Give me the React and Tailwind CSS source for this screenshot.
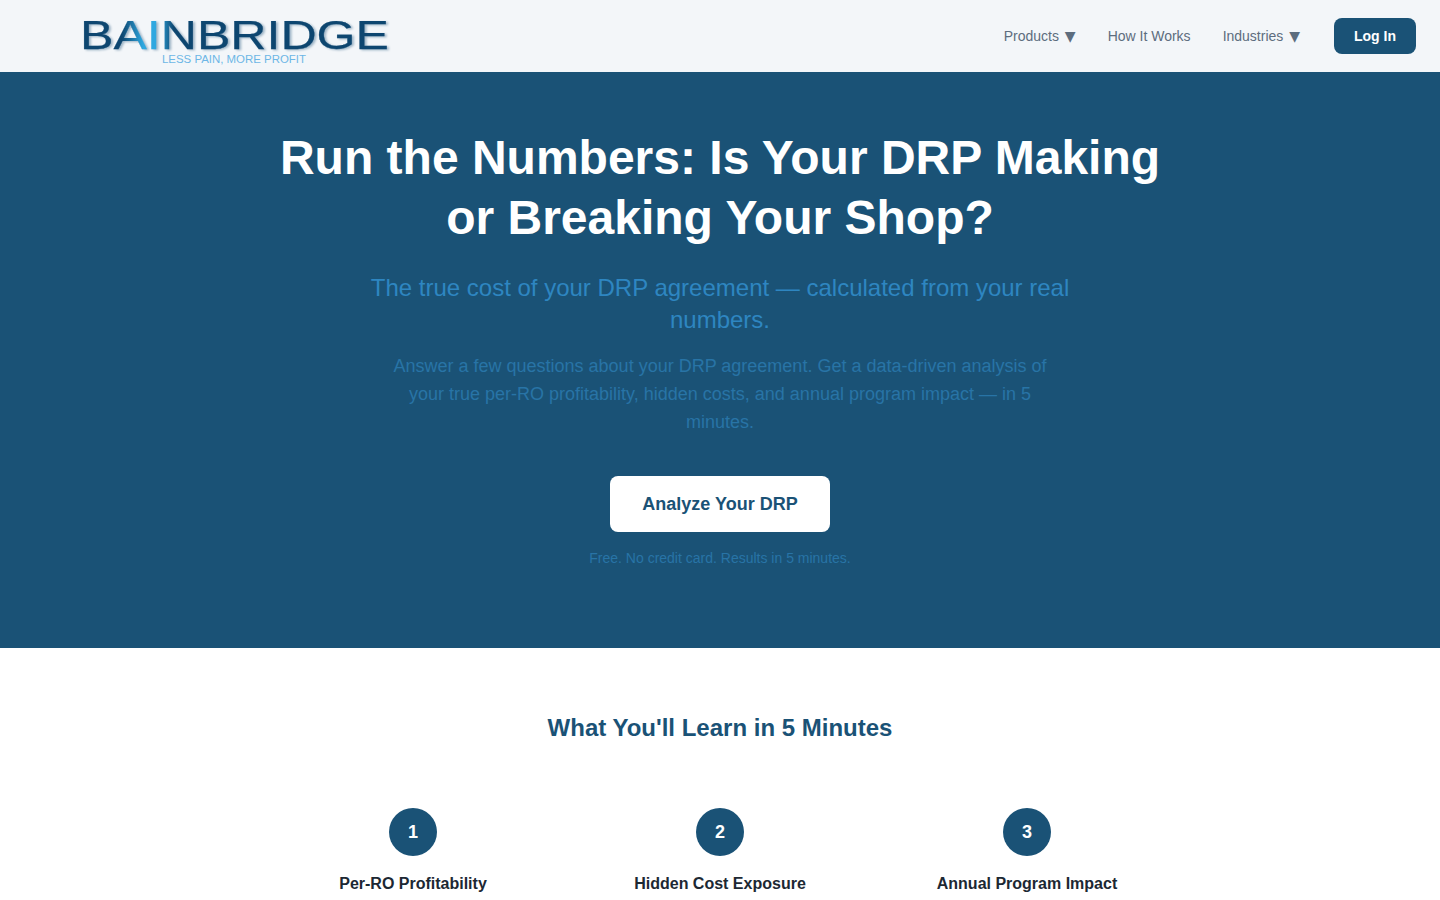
import React from 'react';

const Logo = () => (
  <svg width="320" height="72" viewBox="0 0 320 72" className="block">
    <defs>
      <linearGradient id="logoFill" gradientUnits="userSpaceOnUse" x1="8" y1="0" x2="314" y2="0">
        <stop offset="0%" stopColor="#0d4670" />
        <stop offset="13%" stopColor="#0d4670" />
        <stop offset="20%" stopColor="#2fa8e0" />
        <stop offset="25%" stopColor="#2fa8e0" />
        <stop offset="30%" stopColor="#0d4670" />
        <stop offset="100%" stopColor="#0d4670" />
      </linearGradient>
    </defs>
    <text
      x="6"
      y="49"
      textLength="309"
      lengthAdjust="spacingAndGlyphs"
      fontFamily="'Liberation Sans', Arial, sans-serif"
      fontSize="41"
      fill="url(#logoFill)"
      stroke="url(#logoFill)"
      strokeWidth="0.25"
      className="drop-shadow-[2px_1px_1px_#9db4c6]"
    >
      BAINBRIDGE
    </text>
    <text
      x="88"
      y="63"
      textLength="144"
      lengthAdjust="spacingAndGlyphs"
      fontFamily="'Liberation Sans', Arial, sans-serif"
      fontSize="10"
      fill="#6db6e6"
    >
      LESS PAIN, MORE PROFIT
    </text>
  </svg>
);

const Caret = () => <span className="ml-[2px] font-['DejaVu_Sans',sans-serif] text-[14px] leading-none">▼</span>;

const steps = [
  { n: 1, title: 'Per-RO Profitability' },
  { n: 2, title: 'Hidden Cost Exposure' },
  { n: 3, title: 'Annual Program Impact' },
];

const App = () => {
  return (
    <div className="font-['Liberation_Sans',Arial,sans-serif] bg-white h-[900px] overflow-hidden">
      <header className="h-[72px] bg-[#f3f6f9] flex items-center justify-between pl-[74px] pr-6">
        <Logo />
        <nav className="flex items-center gap-8 text-[14px] text-[#5d6d7e]">
          <a>Products <Caret /></a>
          <a>How It Works</a>
          <a>Industries <Caret /></a>
          <button className="ml-[2px] h-9 w-[82px] rounded-lg bg-[#1a5276] text-white font-bold">Log In</button>
        </nav>
      </header>

      <section className="h-[576px] bg-[#1a5276] pt-14 text-center">
        <h1 className="mx-auto w-[900px] text-[48px] leading-[60px] font-bold text-white">
          Run the Numbers: Is Your DRP Making or Breaking Your Shop?
        </h1>
        <p className="mx-auto mt-6 w-[720px] text-[24px] leading-8 text-[#2e86c1]">
          The true cost of your DRP agreement — calculated from your real numbers.
        </p>
        <p className="mx-auto mt-4 w-[680px] text-[18px] leading-7 text-[#2874a6]">
          Answer a few questions about your DRP agreement. Get a data-driven analysis of your true per-RO profitability, hidden costs, and annual program impact — in 5 minutes.
        </p>
        <button className="mt-10 h-14 w-[220px] rounded-lg bg-white text-[18px] font-bold text-[#1a5276]">
          Analyze Your DRP
        </button>
        <p className="mt-4 text-[14px] leading-5 text-[#2874a6]">Free. No credit card. Results in 5 minutes.</p>
      </section>

      <section className="pt-16 text-center">
        <h2 className="text-[24px] leading-8 font-bold text-[#1a5276]">What You'll Learn in 5 Minutes</h2>
        <div className="mx-auto mt-16 grid w-[889px] grid-cols-3 gap-8">
          {steps.map((s) => (
            <div key={s.n} className="flex flex-col items-center">
              <div className="flex h-12 w-12 items-center justify-center rounded-full bg-[#1a5276] text-[18px] font-bold text-white">
                {s.n}
              </div>
              <h3 className="mt-4 text-[16px] leading-6 font-bold text-[#1c2833]">{s.title}</h3>
            </div>
          ))}
        </div>
      </section>
    </div>
  );
};

export default App;
